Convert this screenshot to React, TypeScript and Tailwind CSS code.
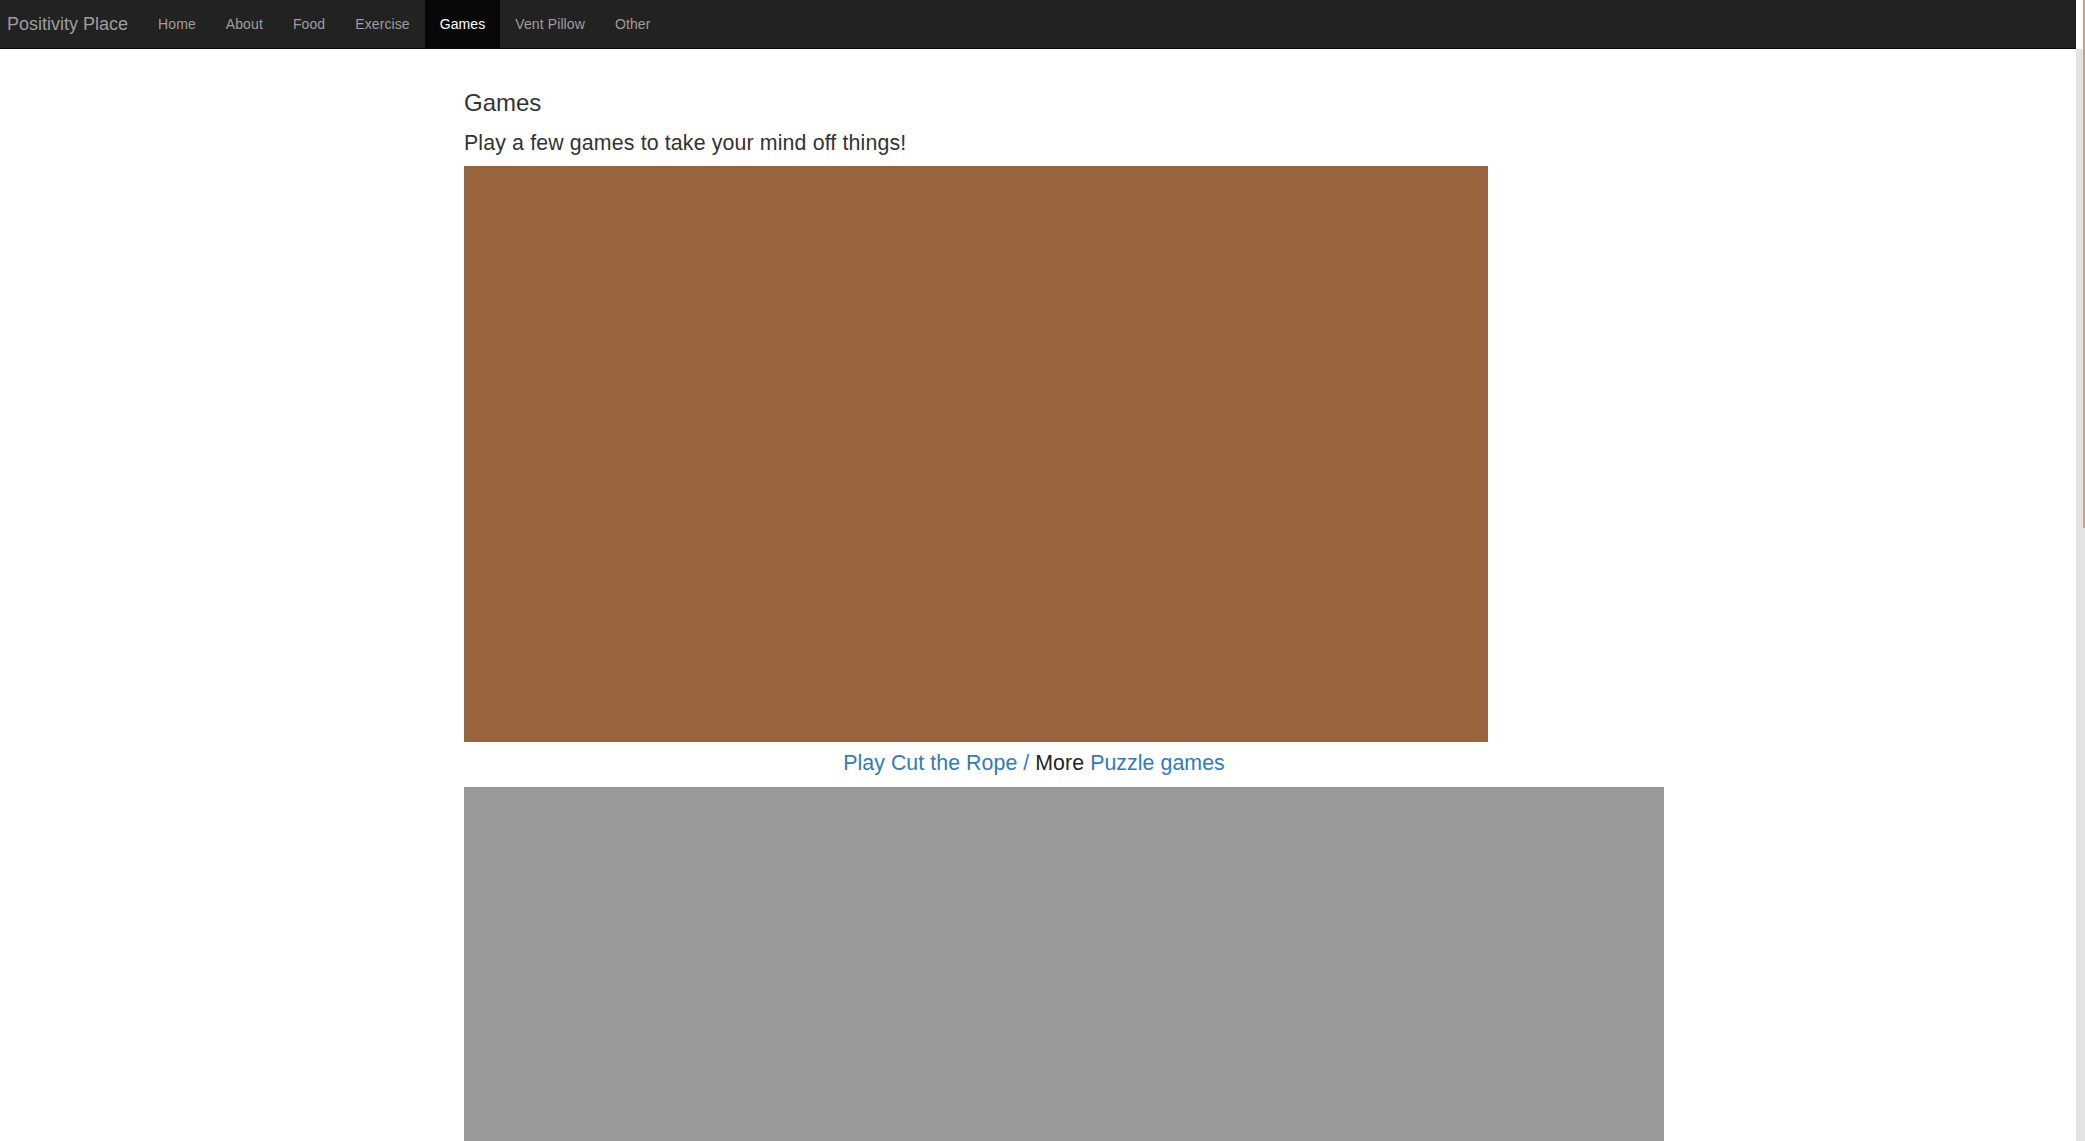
const navItems = ['Home', 'About', 'Food', 'Exercise', 'Games', 'Vent Pillow', 'Other']

const App: React.FC = () => {
  return (
    <div className="h-screen w-full flex overflow-hidden bg-white font-['Liberation_Sans',Arial,sans-serif]">
      <div className="flex-1 flex flex-col min-w-0">
        <nav className="h-[49px] shrink-0 bg-[#222] border-b border-[#080808] flex items-stretch">
          <a className="pl-[7px] pr-[15px] flex items-center text-[18px] text-[#9d9d9d]">Positivity Place</a>
          {navItems.map((item) => (
            <a
              key={item}
              className={
                item === 'Games'
                  ? 'px-[15px] flex items-center text-[14px] tracking-[0.1px] text-white bg-[#080808]'
                  : 'px-[15px] flex items-center text-[14px] tracking-[0.1px] text-[#9d9d9d]'
              }
            >
              {item}
            </a>
          ))}
        </nav>
        <main className="flex-1 pl-[464px] pt-[41px]">
          <div className="w-[1140px] flex flex-col">
            <h3 className="text-[24px] leading-[26px] text-[#333]">Games</h3>
            <p className="mt-[12px] text-[21.33px] leading-[30px] tracking-[0.14px] text-[#333]">Play a few games to take your mind off things!</p>
            <div className="mt-[8px] w-[1024px] h-[576px] bg-[#98653f]" />
            <div className="mt-[6px] text-center text-[21.33px] leading-[30px] tracking-[0.06px] text-[#337ab7]">
              <a>Play Cut the Rope</a> / <span className="text-[#222]">More</span> <a>Puzzle games</a>
            </div>
            <div className="mt-[9px] w-[1200px] h-[675px] bg-[#999]" />
          </div>
        </main>
      </div>
      <div className="w-[9px] shrink-0 flex">
        <div className="w-[7px] flex flex-col">
          <div className="h-[49px] bg-white" />
          <div className="flex-1 bg-[#e3e3e3]" />
        </div>
        <div className="w-[2px] flex flex-col bg-[#e3e3e3]">
          <div className="h-[528px] bg-[#e8957b]" />
        </div>
      </div>
    </div>
  )
}

export default App
